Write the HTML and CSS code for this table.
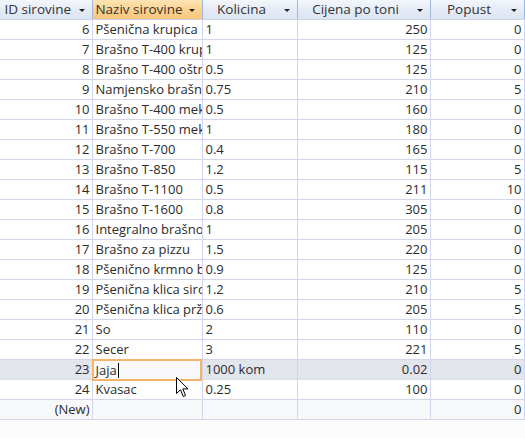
FILE: index.html
```html
<!DOCTYPE html>
<html>
<head>
<meta charset="utf-8">
<link rel="stylesheet" href="styles.css">
</head>
<body>
<div class="sheet">
<table class="grid">
<colgroup>
<col class="c-id"><col class="c-name"><col class="c-qty"><col class="c-price"><col class="c-disc">
</colgroup>
<thead>
<tr>
<th><span class="lbl">ID sirovine</span><span class="arr"></span></th>
<th class="sel"><span class="lbl">Naziv sirovine</span><span class="arr"></span></th>
<th><span class="lbl">Kolicina</span><span class="arr"></span></th>
<th><span class="lbl">Cijena po toni</span><span class="arr"></span></th>
<th><span class="lbl">Popust</span><span class="arr"></span></th>
</tr>
</thead>
<tbody>
<tr><td class="num">6</td><td><div class="clip">Pšenična krupica</div></td><td>1</td><td class="num">250</td><td class="num">0</td></tr>
<tr><td class="num">7</td><td><div class="clip">Brašno T-400 krupno</div></td><td>1</td><td class="num">125</td><td class="num">0</td></tr>
<tr><td class="num">8</td><td><div class="clip">Brašno T-400 oštro</div></td><td>0.5</td><td class="num">125</td><td class="num">0</td></tr>
<tr><td class="num">9</td><td><div class="clip">Namjensko brašno</div></td><td>0.75</td><td class="num">210</td><td class="num">5</td></tr>
<tr><td class="num">10</td><td><div class="clip">Brašno T-400 meko</div></td><td>0.5</td><td class="num">160</td><td class="num">0</td></tr>
<tr><td class="num">11</td><td><div class="clip">Brašno T-550 meko</div></td><td>1</td><td class="num">180</td><td class="num">0</td></tr>
<tr><td class="num">12</td><td><div class="clip">Brašno T-700</div></td><td>0.4</td><td class="num">165</td><td class="num">0</td></tr>
<tr><td class="num">13</td><td><div class="clip">Brašno T-850</div></td><td>1.2</td><td class="num">115</td><td class="num">5</td></tr>
<tr><td class="num">14</td><td><div class="clip">Brašno T-1100</div></td><td>0.5</td><td class="num">211</td><td class="num">10</td></tr>
<tr><td class="num">15</td><td><div class="clip">Brašno T-1600</div></td><td>0.8</td><td class="num">305</td><td class="num">0</td></tr>
<tr><td class="num">16</td><td><div class="clip">Integralno brašno</div></td><td>1</td><td class="num">205</td><td class="num">0</td></tr>
<tr><td class="num">17</td><td><div class="clip">Brašno za pizzu</div></td><td>1.5</td><td class="num">220</td><td class="num">0</td></tr>
<tr><td class="num">18</td><td><div class="clip">Pšenično krmno brašno</div></td><td>0.9</td><td class="num">125</td><td class="num">0</td></tr>
<tr><td class="num">19</td><td><div class="clip">Pšenična klica sirova</div></td><td>1.2</td><td class="num">210</td><td class="num">5</td></tr>
<tr><td class="num">20</td><td><div class="clip">Pšenična klica pržena</div></td><td>0.6</td><td class="num">205</td><td class="num">5</td></tr>
<tr><td class="num">21</td><td>So</td><td>2</td><td class="num">110</td><td class="num">0</td></tr>
<tr><td class="num">22</td><td>Secer</td><td>3</td><td class="num">221</td><td class="num">5</td></tr>
<tr class="cur"><td class="num">23</td><td class="edit"><span class="editbox">Jaja<span class="caret"></span></span><svg class="pointer" width="13" height="21" viewBox="0 0 13 21"><path d="M0.5 0.5 L0.5 16.5 L4.5 12.8 L7.3 19.5 L9.6 18.5 L6.8 11.9 L12 11.9 Z" fill="#fff" stroke="#000" stroke-width="1"/></svg></td><td>1000 kom</td><td class="num">0.02</td><td class="num">0</td></tr>
<tr><td class="num">24</td><td>Kvasac</td><td>0.25</td><td class="num">100</td><td class="num">0</td></tr>
<tr class="new"><td class="num">(New)</td><td></td><td></td><td></td><td class="num">0</td></tr>
</tbody>
</table>
</div>
</body>
</html>
```

FILE: styles.css
```css
html, body {
  margin: 0;
  padding: 0;
  background: #fcfcfd;
}
.sheet {
  width: 525px;
  height: 438px;
  overflow: hidden;
}
.grid {
  table-layout: fixed;
  border-collapse: collapse;
  width: 524px;
  font-family: "Open Sans", "Noto Sans", sans-serif;
  font-size: 13px;
  color: #2b2b2b;
}
.c-id { width: 92px; }
.c-name { width: 110px; }
.c-qty { width: 95px; }
.c-price { width: 133px; }
.c-disc { width: 94px; }

.grid th {
  position: relative;
  height: 19px;
  padding: 0 4px 0 0;
  background: linear-gradient(#f3f6fb, #e4ebf6 55%, #dbe4f2);
  border-right: 1px solid #9fb8dc;
  border-bottom: 1px solid #c9d6ea;
  font-weight: normal;
  font-size: 13.5px;
  color: #333;
  white-space: nowrap;
  overflow: hidden;
  box-sizing: border-box;
  text-align: center;
  line-height: 18px;
}
.grid th .lbl {
  display: inline-block;
  margin-right: 12px;
}
.grid th .arr {
  position: absolute;
  right: 7px;
  top: 9px;
  width: 0;
  height: 0;
  border-left: 3px solid transparent;
  border-right: 3px solid transparent;
  border-top: 3px solid #222;
}
.grid th.sel {
  background: linear-gradient(#fde3b4, #fbd18d 55%, #f8c77a);
}

.grid td {
  height: 20px;
  padding: 0 3px 0 3px;
  border: 1px solid #d3d5ec;
  border-top: none;
  white-space: nowrap;
  overflow: hidden;
  background: #fff;
  box-sizing: border-box;
  line-height: 18px;
}
.clip {
  width: 106px;
  overflow: hidden;
  white-space: nowrap;
}
.grid td:first-child { border-left: none; }
.grid td.num { text-align: right; padding-right: 2px; }

.grid tr.cur td {
  background: #e3e5ed;
  border-bottom-color: #d4e0ee;
}
.grid tr.cur td.edit {
  position: relative;
  overflow: visible;
  padding: 0;
}
.editbox {
  display: block;
  height: 22px;
  margin: -1px 0 -2px -1px;
  box-sizing: border-box;
  border: 2px solid #f5b46a;
  background: #f9f9fb;
  padding: 0 0 0 2px;
  line-height: 18px;
}
.caret {
  display: inline-block;
  width: 1px;
  height: 15px;
  background: #000;
  vertical-align: -3px;
  margin-left: 1px;
}
.pointer {
  position: absolute;
  left: 83px;
  top: 17px;
  z-index: 2;
}
.grid tr.new td {
  background: #f7f8fa;
}
```
